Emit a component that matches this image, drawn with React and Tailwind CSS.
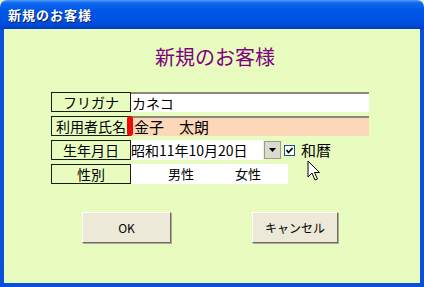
const jp = { fontFamily: '"MS PGothic", "Noto Sans CJK JP", sans-serif' }

function Label({ children }) {
  return (
    <div className="w-[80px] h-[20px] border border-[#1e1e10] flex items-center justify-center text-[14px] leading-[18px] text-black">
      {children}
    </div>
  )
}

function Cursor() {
  return (
    <svg className="absolute left-[307px] top-[160px]" width="14" height="22" viewBox="0 0 14 22">
      <path d="M1 1 L1 17 L5 13 L8 20 L10.5 19 L7.5 12.5 L12.5 12.5 Z" fill="#fff" stroke="#000" strokeWidth="1" strokeLinejoin="miter" />
    </svg>
  )
}

export default function App() {
  return (
    <div className="relative w-[424px] h-[287px] flex flex-col bg-[#e8fcc0] overflow-hidden" style={jp}>
      <div className="h-[29px] shrink-0 rounded-t-[7px] bg-[linear-gradient(to_bottom,#4f9bff_0%,#1068f0_10%,#0058e6_35%,#0054e3_65%,#0048d4_90%,#003bb8_100%)] flex items-center pl-[8px]">
        <span className="text-white font-bold text-[13px] tracking-[1px] [text-shadow:1px_1px_0_#0a1f6e]">新規のお客様</span>
      </div>
      <div className="flex-1 border-x-4 border-b-4 border-[#0a4fd8] flex flex-col">
        <div className="mt-[16px] h-[24px] leading-[24px] text-center text-[20px] text-[#800080] pl-[6px]">新規のお客様</div>

        <div className="mt-[23px] ml-[47px] flex flex-col gap-[4px]">
          <div className="flex">
            <Label>フリガナ</Label>
            <div className="w-[238px] h-[20px] bg-white border-t-2 border-[#8a8a7a] flex items-center pl-[1px] text-[14px] leading-[18px]">カネコ</div>
          </div>
          <div className="flex relative">
            <Label>利用者氏名</Label>
            <div className="w-[238px] h-[20px] bg-[#fcd8b8] border-t-2 border-[#8a8a7a] flex items-center pl-[3px] text-[15px] leading-[18px]">金子　太朗</div>
            <div className="absolute left-[76px] top-0 w-[6px] h-[20px] rounded-full bg-[#e80c0c]" />
          </div>
          <div className="flex items-center relative">
            <Label>生年月日</Label>
            <div className="w-[132px] h-[20px] bg-white flex items-center text-[14px] leading-[18px]">昭和11年10月20日</div>
            <div className="w-[17px] h-[18px] ml-[1px] bg-[#dcdad0] border border-[#9a9a90] flex items-center justify-center">
              <svg width="7" height="4" viewBox="0 0 7 4"><path d="M0 0 H7 L3.5 4 Z" fill="#000" /></svg>
            </div>
            <div className="ml-[3px] w-[11px] h-[11px] bg-white border border-[#1c5180] flex items-center justify-center">
              <svg width="7" height="7" viewBox="0 0 7 7"><path d="M0.5 3 L2.5 5.5 L6.5 1" fill="none" stroke="#000" strokeWidth="1.6" /></svg>
            </div>
            <span className="ml-[6px] text-[15px] leading-[18px]">和暦</span>
          </div>
          <div className="flex">
            <Label>性別</Label>
            <div className="w-[157px] h-[20px] bg-white flex items-center text-[13px] leading-[18px]">
              <span className="ml-[37px]">男性</span>
              <span className="ml-[41px]">女性</span>
            </div>
          </div>
        </div>

        <div className="mt-[28px] flex">
          <button className="ml-[78px] w-[89px] h-[31px] bg-[#ece9d8] border border-t-white border-l-white border-b-[#716f64] border-r-[#716f64] shadow-[1px_1px_0_#aca899] text-[12px] text-black">OK</button>
          <button className="ml-[81px] w-[86px] h-[31px] bg-[#ece9d8] border border-t-white border-l-white border-b-[#716f64] border-r-[#716f64] shadow-[1px_1px_0_#aca899] text-[12px] text-black">キャンセル</button>
        </div>
      </div>
      <Cursor />
    </div>
  )
}
